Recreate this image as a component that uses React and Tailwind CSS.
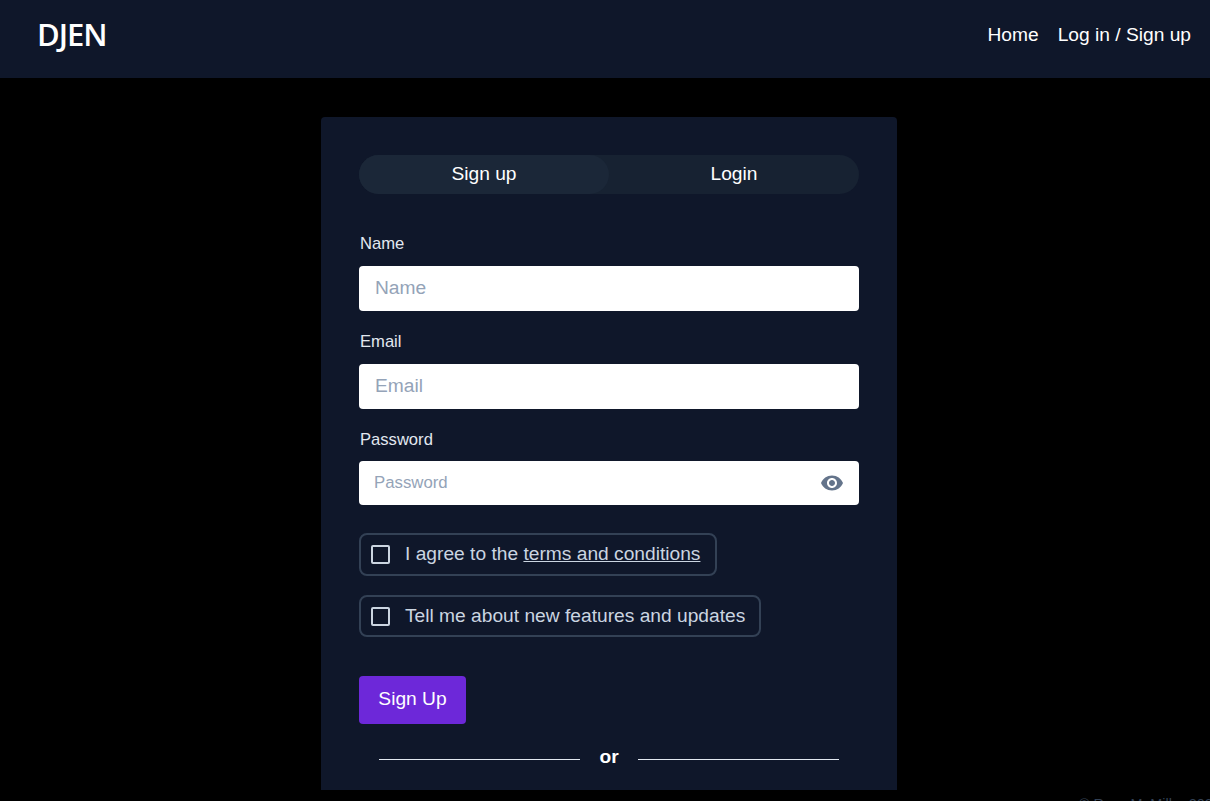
import React from 'react';
import { MdVisibility } from 'react-icons/md';

const Field = ({ label, placeholder, type = 'text', className = '' }) => (
  <div className={className}>
    <label className="block h-5 pt-px pl-px text-[16.6px] leading-5 text-[#e2e8f0]">{label}</label>
    <input
      type={type}
      placeholder={placeholder}
      className="block w-full h-[45px] mt-[13px] pb-[2px] bg-white rounded px-4 text-[19.2px] text-[#0f172a] placeholder:text-[#94a3b8] outline-none"
    />
  </div>
);

const CheckRow = ({ className = '', children }) => (
  <label className={`flex w-fit items-center border-2 border-[#334155] rounded-lg pl-[10px] pr-[14px] text-[19.2px] text-[#cbd5e1] ${className}`}>
    <span className="block w-[19px] h-[19px] border-2 border-[#cbd5e1] rounded-[2px] mr-[15px]" />
    <span>{children}</span>
  </label>
);

const App = () => {
  return (
    <div className="h-screen overflow-hidden bg-black font-['Liberation_Sans',Arial,sans-serif]">
      <nav className="h-[78px] bg-[#0f172a] flex justify-between items-center pl-[37px] pr-[19px]">
        <a href="#" className="font-['Open_Sans',sans-serif] font-semibold text-[31px] leading-none text-white tracking-[-1px] -mt-[10px]">DJEN</a>
        <div className="flex gap-[19px] text-[19.2px] text-white -mt-[8px]">
          <a href="#">Home</a>
          <a href="#">Log in / Sign up</a>
        </div>
      </nav>

      <main className="w-[576px] h-[673px] ml-[321px] mt-[39px] bg-[#0f172a] rounded-t pt-[38px] px-[38px]">
        <div className="flex h-[39px] rounded-[20px] bg-[#172232] text-white text-[19.2px]">
          <button className="w-1/2 rounded-[20px] bg-[#1b2738]">Sign up</button>
          <button className="w-1/2 rounded-[20px]">Login</button>
        </div>

        <form className="pt-[39px]">
          <Field label="Name" placeholder="Name" />
          <Field label="Email" placeholder="Email" type="email" className="mt-5" />
          <div className="mt-5">
            <label className="block h-5 pt-px pl-px text-[16.6px] leading-5 text-[#e2e8f0]">Password</label>
            <div className="relative mt-3">
              <input
                type="password"
                placeholder="Password"
                className="block w-full h-[44px] bg-white rounded pl-[15px] pr-12 text-[16.8px] text-[#0f172a] placeholder:text-[#94a3b8] outline-none"
              />
              <MdVisibility className="absolute right-[15px] top-[10px] text-[#64748b]" size={24} />
            </div>
          </div>

          <CheckRow className="h-[43px] mt-7 min-w-[358px]">
            I agree to the <a href="#" className="underline">terms and conditions</a>
          </CheckRow>
          <CheckRow className="h-[42px] mt-[19px]">Tell me about new features and updates</CheckRow>

          <button type="button" className="block w-[107px] h-12 pb-[2px] mt-[39px] rounded bg-[#6d28d9] text-white text-[19.2px]">Sign Up</button>

          <div className="flex items-center justify-center px-5 mt-[23px] h-5 text-white">
            <span className="flex-1 h-px bg-[#e2e8f0] mt-[5px]" />
            <span className="w-[58px] text-center font-bold text-[19.2px]">or</span>
            <span className="flex-1 h-px bg-[#e2e8f0] mt-[5px]" />
          </div>
        </form>
      </main>

      <footer className="pl-[1079px] mt-[4px] text-[14.4px] text-[#334155] whitespace-nowrap">© Ross M. Miller 2024</footer>
    </div>
  );
};

export default App;
